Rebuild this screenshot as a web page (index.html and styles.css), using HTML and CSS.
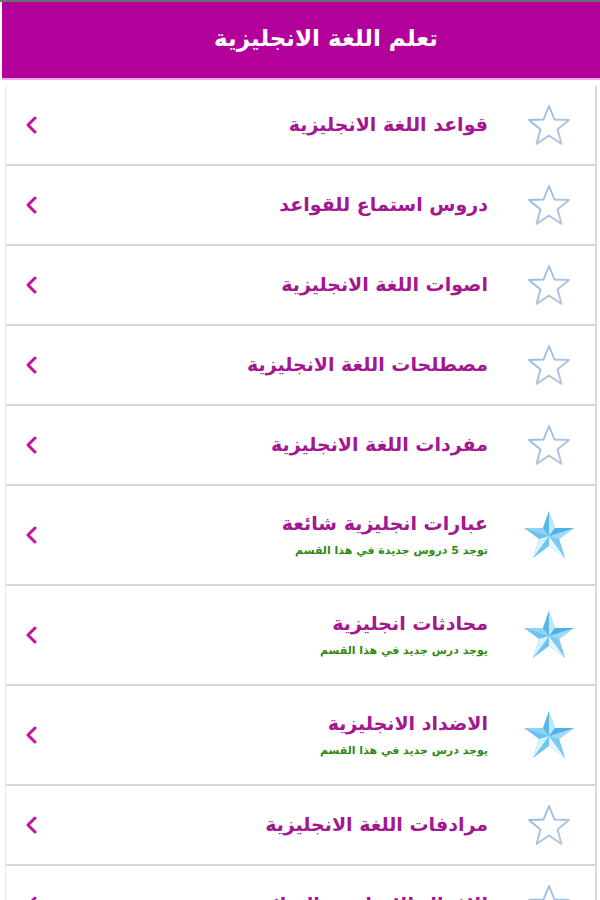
FILE: index.html
```html
<!DOCTYPE html>
<html lang="ar" dir="rtl">
<head>
	<meta charset="utf-8">
	<title>تعلم اللغة الانجليزية</title>
	<link rel="stylesheet" href="styles.css">
</head>
<body>
	<svg width="0" height="0" class="defs">
		<defs>
			<linearGradient id="outline" x1="0" y1="0" x2="1" y2="1">
				<stop offset="0" stop-color="#8fb8e8"/>
				<stop offset="1" stop-color="#b7c9e0"/>
			</linearGradient>
			<symbol id="star-empty" viewBox="0 0 44 42">
				<polygon points="22,2 27.5,15.5 42,16 30.5,25.5 34.5,40 22,31.5 9.5,40 13.5,25.5 2,16 16.5,15.5" fill="#fff" stroke="url(#outline)" stroke-width="1.9" stroke-linejoin="round"/>
			</symbol>
			<symbol id="star-full" viewBox="0 0 52 50">
				<polygon points="26,1 32,18 51,18 36,29 42,48 26,36 10,48 16,29 1,18 20,18" fill="#6cc4f0"/>
				<polygon points="26,1 32,18 26,26" fill="#bfe8fb"/>
				<polygon points="51,18 36,29 26,26" fill="#9fdaf7"/>
				<polygon points="42,48 26,36 26,26" fill="#e4f6fe"/>
				<polygon points="10,48 16,29 26,26" fill="#d6f1fd"/>
				<polygon points="1,18 20,18 26,26" fill="#8fd3f5"/>
				<polygon points="26,1 20,18 26,26" fill="#58b8ea"/>
				<polygon points="32,18 51,18 26,26" fill="#4fb0e6"/>
				<polygon points="36,29 42,48 26,26" fill="#7cc9f1"/>
			</symbol>
		</defs>
	</svg>

	<div class="topbar"></div>
	<header class="header">
		<h1>تعلم اللغة الانجليزية</h1>
	</header>

	<ul class="menu">
		<li class="row">
			<div class="icon"><svg class="star" width="44" height="42"><use href="#star-empty"/></svg></div>
			<div class="label"><div class="name">قواعد اللغة الانجليزية</div></div>
			<svg class="arrow" width="12" height="18" viewBox="0 0 12 18"><polyline points="10,2 3,9 10,16"/></svg>
		</li>
		<li class="row">
			<div class="icon"><svg class="star" width="44" height="42"><use href="#star-empty"/></svg></div>
			<div class="label"><div class="name">دروس استماع للقواعد</div></div>
			<svg class="arrow" width="12" height="18" viewBox="0 0 12 18"><polyline points="10,2 3,9 10,16"/></svg>
		</li>
		<li class="row">
			<div class="icon"><svg class="star" width="44" height="42"><use href="#star-empty"/></svg></div>
			<div class="label"><div class="name">اصوات اللغة الانجليزية</div></div>
			<svg class="arrow" width="12" height="18" viewBox="0 0 12 18"><polyline points="10,2 3,9 10,16"/></svg>
		</li>
		<li class="row">
			<div class="icon"><svg class="star" width="44" height="42"><use href="#star-empty"/></svg></div>
			<div class="label"><div class="name">مصطلحات اللغة الانجليزية</div></div>
			<svg class="arrow" width="12" height="18" viewBox="0 0 12 18"><polyline points="10,2 3,9 10,16"/></svg>
		</li>
		<li class="row">
			<div class="icon"><svg class="star" width="44" height="42"><use href="#star-empty"/></svg></div>
			<div class="label"><div class="name">مفردات اللغة الانجليزية</div></div>
			<svg class="arrow" width="12" height="18" viewBox="0 0 12 18"><polyline points="10,2 3,9 10,16"/></svg>
		</li>
		<li class="row tall">
			<div class="icon"><svg class="star" width="52" height="50"><use href="#star-full"/></svg></div>
			<div class="label">
				<div class="name">عبارات انجليزية شائعة</div>
				<div class="note">توجد 5 دروس جديدة في هذا القسم</div>
			</div>
			<svg class="arrow" width="12" height="18" viewBox="0 0 12 18"><polyline points="10,2 3,9 10,16"/></svg>
		</li>
		<li class="row tall">
			<div class="icon"><svg class="star" width="52" height="50"><use href="#star-full"/></svg></div>
			<div class="label">
				<div class="name">محادثات انجليزية</div>
				<div class="note">يوجد درس جديد في هذا القسم</div>
			</div>
			<svg class="arrow" width="12" height="18" viewBox="0 0 12 18"><polyline points="10,2 3,9 10,16"/></svg>
		</li>
		<li class="row tall">
			<div class="icon"><svg class="star" width="52" height="50"><use href="#star-full"/></svg></div>
			<div class="label">
				<div class="name">الاضداد الانجليزية</div>
				<div class="note">يوجد درس جديد في هذا القسم</div>
			</div>
			<svg class="arrow" width="12" height="18" viewBox="0 0 12 18"><polyline points="10,2 3,9 10,16"/></svg>
		</li>
		<li class="row">
			<div class="icon"><svg class="star" width="44" height="42"><use href="#star-empty"/></svg></div>
			<div class="label"><div class="name">مرادفات اللغة الانجليزية</div></div>
			<svg class="arrow" width="12" height="18" viewBox="0 0 12 18"><polyline points="10,2 3,9 10,16"/></svg>
		</li>
		<li class="row">
			<div class="icon"><svg class="star" width="44" height="42"><use href="#star-empty"/></svg></div>
			<div class="label"><div class="name">الافعال الانجليزية الشائعة</div></div>
			<svg class="arrow" width="12" height="18" viewBox="0 0 12 18"><polyline points="10,2 3,9 10,16"/></svg>
		</li>
	</ul>
</body>
</html>
```

FILE: styles.css
```css
body {
	margin: 0;
	background: #fff;
	font-family: "DejaVu Sans", "Noto Sans", sans-serif;
	overflow: hidden;
}

.defs {
	position: absolute;
}

.topbar {
	height: 2px;
	background: #6e6e6e;
}

.header {
	height: 76px;
	margin-left: 2px;
	background: #b3009a;
	border-bottom: 2px solid #f4a9e8;
	display: flex;
	align-items: center;
	justify-content: center;
}

.header h1 {
	margin: 0 0 4px 0;
	padding-left: 50px;
	color: #fff;
	font-size: 23px;
	font-weight: bold;
}

.menu {
	list-style-type: none;
	margin: 6px 3px 0 5px;
	padding: 0;
	border-left: 1px solid #e8e8e8;
	border-right: 2px solid #dadada;
}

.row {
	display: flex;
	align-items: center;
	height: 78px;
	border-bottom: 2px solid #d6d6d6;
}

.row.tall {
	height: 98px;
}

.icon {
	width: 92px;
	display: flex;
	justify-content: center;
	align-items: center;
}

.label {
	flex: 1;
	padding-right: 15px;
}

.name {
	color: #a3178f;
	font-size: 19px;
	font-weight: bold;
	margin-top: -2px;
}

.note {
	color: #2f8a12;
	font-size: 11px;
	font-weight: bold;
	margin-top: 10px;
}

.arrow {
	margin-left: 19px;
	fill: none;
	stroke: #c2139f;
	stroke-width: 3;
	stroke-linecap: round;
	stroke-linejoin: round;
}
```
